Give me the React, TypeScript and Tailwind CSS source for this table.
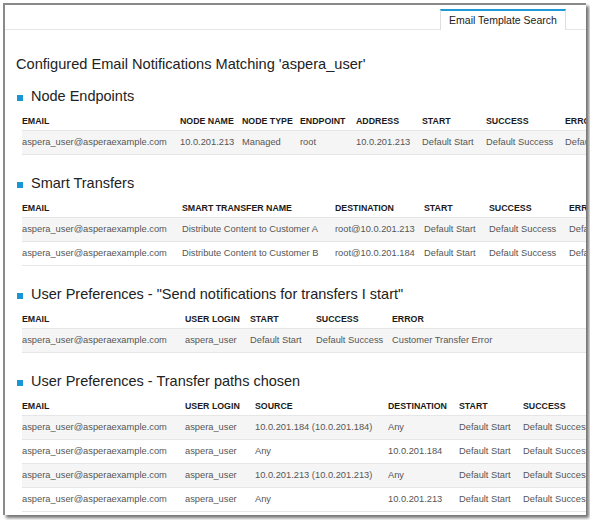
import React from "react";

type Table = { title: string; cols: [string, number][]; rows: string[][] };

const EMAIL = "aspera_user@asperaexample.com";

const tables: Table[] = [
  {
    title: "Node Endpoints",
    cols: [["EMAIL", 158], ["NODE NAME", 62], ["NODE TYPE", 58], ["ENDPOINT", 56], ["ADDRESS", 66], ["START", 64], ["SUCCESS", 79], ["ERROR", 120]],
    rows: [[EMAIL, "10.0.201.213", "Managed", "root", "10.0.201.213", "Default Start", "Default Success", "Default Error"]],
  },
  {
    title: "Smart Transfers",
    cols: [["EMAIL", 160], ["SMART TRANSFER NAME", 153], ["DESTINATION", 89], ["START", 65], ["SUCCESS", 80], ["ERROR", 120]],
    rows: [
      [EMAIL, "Distribute Content to Customer A", "root@10.0.201.213", "Default Start", "Default Success", "Default Error"],
      [EMAIL, "Distribute Content to Customer B", "root@10.0.201.184", "Default Start", "Default Success", "Default Error"],
    ],
  },
  {
    title: "User Preferences - \"Send notifications for transfers I start\"",
    cols: [["EMAIL", 163], ["USER LOGIN", 65], ["START", 66], ["SUCCESS", 76], ["ERROR", 250]],
    rows: [[EMAIL, "aspera_user", "Default Start", "Default Success", "Customer Transfer Error"]],
  },
  {
    title: "User Preferences - Transfer paths chosen",
    cols: [["EMAIL", 163], ["USER LOGIN", 70], ["SOURCE", 133], ["DESTINATION", 71], ["START", 64], ["SUCCESS", 120]],
    rows: [
      [EMAIL, "aspera_user", "10.0.201.184 (10.0.201.184)", "Any", "Default Start", "Default Success"],
      [EMAIL, "aspera_user", "Any", "10.0.201.184", "Default Start", "Default Success"],
      [EMAIL, "aspera_user", "10.0.201.213 (10.0.201.213)", "Any", "Default Start", "Default Success"],
      [EMAIL, "aspera_user", "Any", "10.0.201.213", "Default Start", "Default Success"],
    ],
  },
];

function Section({ t }: { t: Table }) {
  return (
    <div className="mb-[19px]">
      <div className="flex items-center h-[20px] ml-[1px] mb-[6px]">
        <div className="w-[6px] h-[6px] bg-[#1a96d4] mr-[8px] mt-[1px] shrink-0" />
        <div className="text-[14.5px] text-[#222] whitespace-nowrap">{t.title}</div>
      </div>
      <div className="ml-[6px] w-[700px]">
        <div className="flex h-[18px] items-center border-b border-[#e6e6e6]">
          {t.cols.map(([c, w]) => (
            <div key={c} style={{ width: w }} className="shrink-0 text-[8.8px] font-bold text-[#1a1a1a] whitespace-nowrap overflow-hidden">
              {c}
            </div>
          ))}
        </div>
        {t.rows.map((r, i) => (
          <div key={i} className={`flex h-[24px] items-center border-b border-[#e6e6e6] ${i % 2 === 0 ? "bg-[#f5f5f5]" : "bg-white"}`}>
            {r.map((v, j) => (
              <div key={j} style={{ width: t.cols[j][1] }} className="shrink-0 text-[9.3px] text-[#555] whitespace-nowrap overflow-hidden">
                {v}
              </div>
            ))}
          </div>
        ))}
      </div>
    </div>
  );
}

export default function App() {
  return (
    <div className="w-[590px] h-[520px] bg-white overflow-hidden" style={{ fontFamily: "'Liberation Sans', Arial, sans-serif" }}>
      <div className="ml-[3px] mt-[3px] w-[583px] h-[512px] border-t-2 border-l-2 border-[#8a8a8a] shadow-[3px_3px_3px_rgba(0,0,0,0.55)] overflow-hidden flex flex-col bg-white">
        <div className="h-[25px] border-b border-[#e6e6e6] flex justify-end items-end pr-[20px] shrink-0">
          <div className="w-[126px] h-[21px] -mb-px border-t-2 border-[#1e9bd7] border-x border-x-[#dedede] bg-white flex items-center justify-center text-[10.5px] text-[#222]">
            Email Template Search
          </div>
        </div>
        <div className="pl-[11px] pt-[25px]">
          <div className="h-[20px] flex items-center text-[14.6px] text-[#222] mb-[12px] whitespace-nowrap">
            Configured Email Notifications Matching 'aspera_user'
          </div>
          {tables.map((t) => (
            <Section key={t.title} t={t} />
          ))}
        </div>
      </div>
    </div>
  );
}
